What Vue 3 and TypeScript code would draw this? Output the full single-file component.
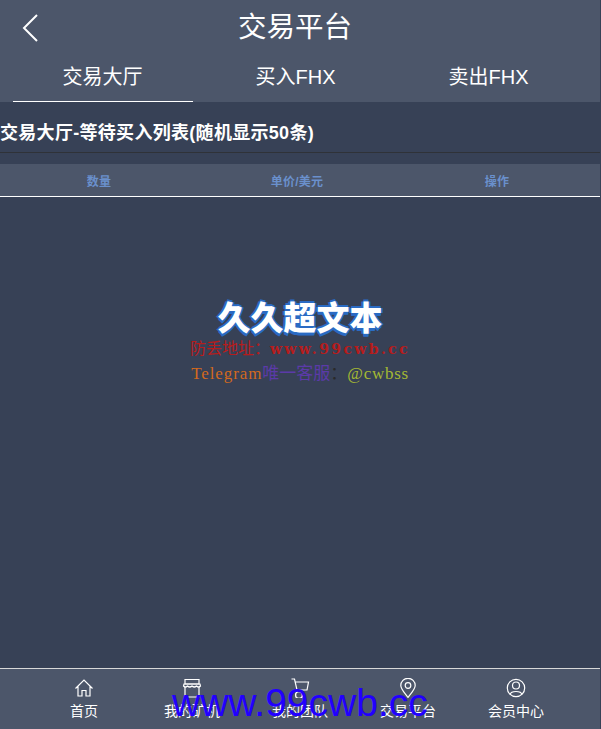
<template>
  <div class="page">
    <header class="top">
      <div class="title-row">
        <svg class="back" width="18" height="30" viewBox="0 0 18 30" fill="none">
          <path d="M16 2 L3 15 L16 28" stroke="#fff" stroke-width="2" />
        </svg>
        <h1>交易平台</h1>
      </div>
      <nav class="tabs">
        <div v-for="(t, i) in tabs" :key="t" class="tab" :class="{ active: i === 0 }">{{ t }}</div>
      </nav>
    </header>

    <main class="body">
      <h2 class="section">交易大厅-等待买入列表(随机显示50条)</h2>
      <div class="thead">
        <span v-for="c in cols" :key="c">{{ c }}</span>
      </div>
      <div class="notice">
        <div class="logo">久久超文本</div>
        <div class="addr">防丢地址：<span class="url">www.99cwb.cc</span></div>
        <div class="tg"><span class="t1">Telegram</span><span class="t2">唯一客服</span><span class="t3">：</span><span class="t4">@cwbss</span></div>
      </div>
    </main>

    <footer class="bar">
      <div v-for="n in nav" :key="n.label" class="item">
        <svg width="20" height="20" viewBox="0 0 20 20" fill="none" stroke="#fff" stroke-width="1.2" v-html="n.icon"></svg>
        <span>{{ n.label }}</span>
      </div>
    </footer>

    <div class="mark">www.99cwb.cc</div>
  </div>
</template>

<script setup lang="ts">
const tabs = ['交易大厅', '买入FHX', '卖出FHX']
const cols = ['数量', '单价/美元', '操作']
const nav = [
  { label: '首页', icon: '<path d="M1.5 10.5 L10 2 L18.5 10.5 M4 8.5 V18 H8 V12.5 H12 V18 H16 V8.5" />' },
  { label: '我的矿机', icon: '<path d="M3 8.5 V19 H17 V8.5 M3 1.5 H17 V6 H3 Z" /><path d="M2 6 H18 L18.5 8 Q16.5 10 14.5 8 Q12.3 10 10 8 Q7.7 10 5.5 8 Q3.5 10 1.5 8 Z" />' },
  { label: '我的团队', icon: '<path d="M1.5 1 H4.5 L7 12 H17 L18.5 4 H5.2" /><circle cx="9" cy="17" r="3.4" stroke-width="1.4" />' },
  { label: '交易平台', icon: '<path d="M10 19.5 C6 14 2.8 11 2.8 7.5 A7.2 7.2 0 0 1 17.2 7.5 C17.2 11 14 14 10 19.5 Z" /><circle cx="10" cy="7.5" r="2.8" />' },
  { label: '会员中心', icon: '<circle cx="10" cy="10" r="8.7" /><circle cx="10" cy="7.5" r="3.5" /><path d="M4 16.5 C5 12.5 15 12.5 16 16.5" />' }
]
</script>

<style scoped>
.page {
  position: relative;
  width: 600px;
  height: 729px;
  overflow: hidden;
  display: flex;
  flex-direction: column;
  background: #374156;
  color: #fff;
  font-family: "Liberation Sans", "Noto Sans CJK SC", sans-serif;
}

.top {
  height: 102px;
  background: #4c566a;
  flex: none;
}

.title-row {
  height: 56px;
  position: relative;
  display: flex;
  justify-content: center;
  padding-right: 10px;
}

.back {
  position: absolute;
  left: 21px;
  top: 13px;
}

h1 {
  margin: 0;
  font-size: 28.5px;
  font-weight: 400;
  line-height: 54px;
}

.tabs {
  display: grid;
  grid-template-columns: repeat(3, 193px);
  padding-left: 6px;
}

.tab {
  width: 180px;
  height: 46px;
  line-height: 42px;
  margin: 0 auto;
  text-align: center;
  font-size: 20px;
  box-sizing: border-box;
}

.tab.active {
  border-bottom: 1px solid #fff;
}

.body {
  flex: 1;
  min-height: 0;
  display: flex;
  flex-direction: column;
}

.section {
  margin: 0;
  height: 51px;
  box-sizing: border-box;
  padding-top: 18px;
  line-height: 27px;
  font-size: 18px;
  font-weight: 700;
  letter-spacing: 0.3px;
  border-bottom: 1px solid #2f3238;
}

.thead {
  margin-top: 11px;
  height: 33px;
  box-sizing: border-box;
  display: grid;
  grid-template-columns: 198px 198px 202px;
  align-items: center;
  text-align: center;
  background: #4c566a;
  border-bottom: 1px solid #fff;
  font-size: 12px;
  font-weight: 700;
  letter-spacing: 0.2px;
  color: #6a90cc;
}

.notice {
  margin-top: 101px;
  text-align: center;
}

.logo {
  font-size: 33px;
  font-weight: 900;
  line-height: 41px;
  color: #fff;
  text-shadow: -2px 0 #2a6bc4, 2px 0 #2a6bc4, 0 -2px #2a6bc4, 0 2px #2a6bc4, 0 3px #2a6bc4;
}

.addr {
  font-size: 16px;
  line-height: 20px;
  color: #b71c1c;
  font-family: "Liberation Serif", "Noto Sans CJK SC", serif;
}

.url {
  font-family: "DejaVu Serif", serif;
  font-size: 14px;
  font-weight: 700;
  letter-spacing: 2.4px;
}

.tg {
  font-family: "Liberation Serif", "Noto Sans CJK SC", serif;
  font-size: 17px;
  line-height: 24px;
  margin-top: 3px;
}

.t1 { color: #d2691e; letter-spacing: 0.9px; }
.t2 { color: #5b3aa8; }
.t3 { color: #2a2a2a; }
.t4 { color: #a4b833; letter-spacing: 0.7px; }

.bar {
  flex: none;
  height: 61px;
  box-sizing: border-box;
  background: #4c566a;
  border-top: 1px solid #d8d8d8;
  display: grid;
  grid-template-columns: repeat(5, 108px);
  padding-left: 30px;
}

.item {
  display: flex;
  flex-direction: column;
  align-items: center;
  padding-top: 9px;
}

.item span {
  font-size: 14px;
  line-height: 18px;
  margin-top: 4px;
}

.mark {
  position: absolute;
  left: 172px;
  top: 681px;
  font-family: "Liberation Sans", sans-serif;
  font-size: 39px;
  line-height: 44px;
  color: #2200ff;
  white-space: nowrap;
}
</style>

<style>
body { background: #374156; }
</style>
